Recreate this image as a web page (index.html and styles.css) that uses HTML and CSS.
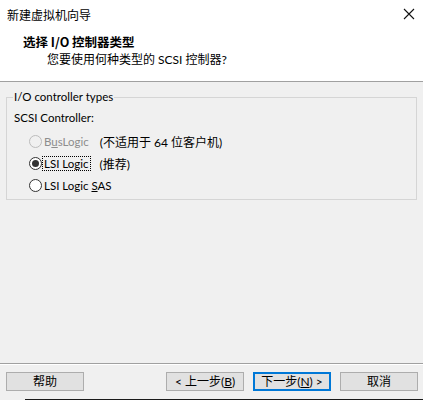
FILE: index.html
```html
<!DOCTYPE html>
<html lang="zh-CN">
<head>
    <meta charset="UTF-8">
    <title>新建虚拟机向导</title>
    <link rel="stylesheet" href="styles.css">
</head>
<body>
    <div class="wizard">
        <div class="top">
            <div class="titlebar">
                <span class="title">新建虚拟机向导</span>
                <svg class="close" width="12" height="12" viewBox="0 0 12 12">
                    <path d="M1 1 L11 11 M11 1 L1 11" stroke="#111" stroke-width="1.1" fill="none"/>
                </svg>
            </div>
            <div class="header">
                <div class="heading">选择 I/O 控制器类型</div>
                <div class="subheading">您要使用何种类型的 SCSI 控制器?</div>
            </div>
        </div>

        <div class="content">
            <fieldset class="group">
                <legend>I/O controller types</legend>
                <div class="label">SCSI Controller:</div>
                <div class="options">
                    <div class="option disabled">
                        <span class="radio"></span>
                        <span class="name">B<u>u</u>sLogic</span>
                        <span class="note">(不适用于 64 位客户机)</span>
                    </div>
                    <div class="option">
                        <span class="radio checked"></span>
                        <span class="name focus">LSI Logic</span>
                        <span class="note">(推荐)</span>
                    </div>
                    <div class="option">
                        <span class="radio"></span>
                        <span class="name">LSI Logic <u>S</u>AS</span>
                    </div>
                </div>
            </fieldset>
        </div>

        <div class="footer">
            <button class="btn">帮助</button>
            <div class="spacer"></div>
            <button class="btn">&lt; 上一步(<u>B</u>)</button>
            <button class="btn primary">下一步(<u>N</u>) &gt;</button>
            <button class="btn">取消</button>
        </div>
        <div class="edge"></div>
    </div>
</body>
</html>
```

FILE: styles.css
```css
* {
    box-sizing: border-box;
}

body {
    margin: 0;
    background-color: #f0f0f0;
    font-family: Lato, "Noto Sans CJK SC", sans-serif;
    font-size: 12px;
    color: #000;
}

.wizard {
    width: 423px;
    height: 400px;
    display: flex;
    flex-direction: column;
}

.top {
    height: 82px;
    background-color: #fff;
    border-bottom: 1px solid #a0a0a0;
}

.titlebar {
    height: 28px;
    display: flex;
    align-items: center;
    justify-content: space-between;
    padding: 0 8px 0 7px;
}

.title {
    font-family: "Noto Sans CJK SC", sans-serif;
    font-size: 12px;
    color: #000;
}

.header {
    padding: 5px 0 0 23px;
}

.heading {
    font-family: "Noto Sans CJK SC", sans-serif;
    font-weight: bold;
    font-size: 12.5px;
    line-height: 18px;
}

.subheading {
    font-size: 12px;
    line-height: 18px;
    padding-left: 24px;
}

.content {
    flex: 1;
    padding: 7px 6px 0 6px;
    border-bottom: 1px solid #a0a0a0;
    box-shadow: 0 1px 0 #fff;
}

.group {
    margin: 0;
    height: 111px;
    border: 1px solid #d5d5d5;
    padding: 2px 7px 0 7px;
}

.group legend {
    padding: 0 1px;
    margin-left: -1px;
    font-size: 11.5px;
    line-height: 16px;
    color: #000;
}

.label {
    font-size: 11.5px;
    line-height: 16px;
    margin-top: 3px;
}

.options {
    margin-top: 7px;
    padding-left: 15px;
    display: flex;
    flex-direction: column;
    gap: 6px;
}

.option {
    display: flex;
    align-items: center;
    height: 16px;
    font-size: 11.5px;
}

.radio {
    width: 13px;
    height: 13px;
    border: 1px solid #333;
    border-radius: 50%;
    background-color: #fff;
    position: relative;
    margin-right: 1px;
}

.radio.checked::after {
    content: "";
    position: absolute;
    left: 2px;
    top: 2px;
    width: 7px;
    height: 7px;
    border-radius: 50%;
    background-color: #333;
}

.option.disabled .radio {
    border-color: #bcbcbc;
    background-color: #f0f0f0;
}

.option.disabled .name {
    color: #8d8d8d;
}

.name {
    padding: 0 1px;
}

.name.focus {
    outline: 1px dotted #000;
    outline-offset: 0;
}

.note {
    margin-left: 10px;
    font-size: 12px;
}

.footer {
    height: 35px;
    display: flex;
    align-items: flex-start;
    padding: 8px 5px 0 6px;
    gap: 9px;
}

.spacer {
    flex: 1;
}

.btn {
    width: 78px;
    height: 19px;
    padding: 0;
    border: 1px solid #adadad;
    background-color: #e1e1e1;
    font-family: Lato, "Noto Sans CJK SC", sans-serif;
    font-size: 12px;
    line-height: 16px;
    color: #000;
}

.btn.primary {
    border: 2px solid #0078d7;
}

.edge {
    height: 1px;
    margin-left: 25px;
    background-color: #1a1a1a;
}
```
